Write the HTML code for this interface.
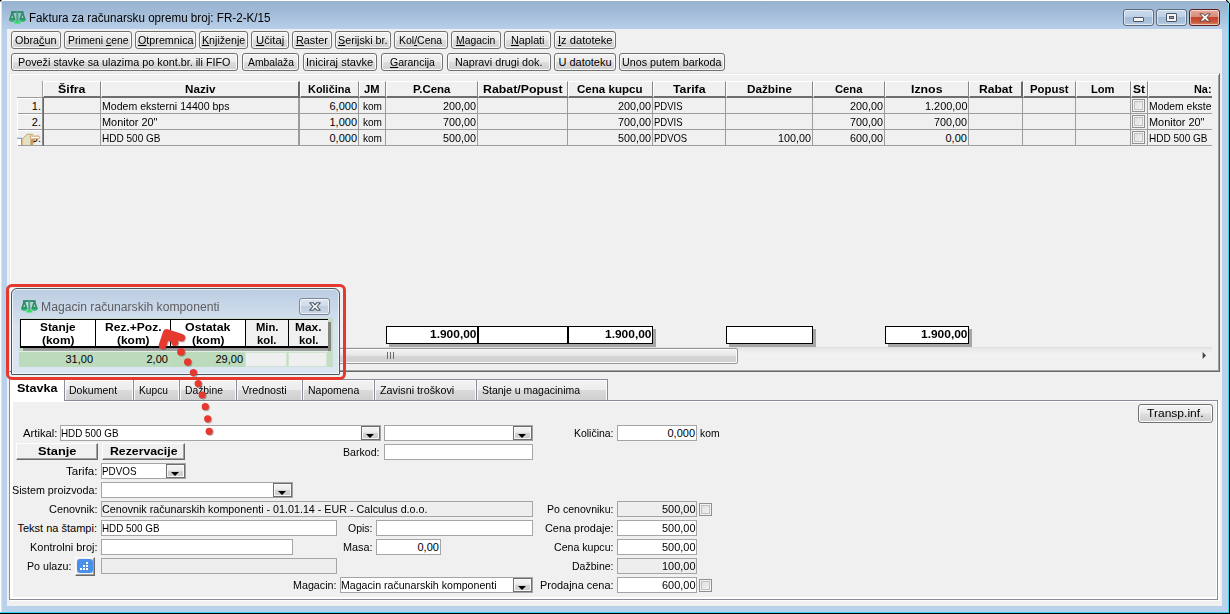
<!DOCTYPE html>
<html lang="sr">
<head>
<meta charset="utf-8">
<title>Faktura za računarsku opremu broj: FR-2-K/15</title>
<style>
html,body{margin:0;padding:0;background:#fff;}
body{width:1230px;height:614px;overflow:hidden;position:relative;font:11px "Liberation Sans",sans-serif;color:#000;}
#root{position:absolute;left:0;top:0;width:1230px;height:614px;overflow:hidden;}
#root div{position:absolute;box-sizing:border-box;}
#root svg{position:absolute;overflow:visible;}
.t{position:absolute;white-space:pre;transform-origin:0 0;}
.btn{border:1px solid #707070;border-radius:3px;background:linear-gradient(#f2f2f2 0,#ebebeb 47%,#dddddd 53%,#cfcfcf 100%);box-shadow:inset 0 0 0 1px #fcfcfc;}
.inp{background:#fff;border:1px solid #a5a5a5;}
.ro{background:#eeeeee;border:1px solid #a5a5a5;}
.dd{border:1px solid #6e6e6e;background:linear-gradient(#f4f4f4 0,#ececec 45%,#d4d4d4 50%,#cdcdcd 100%);box-shadow:inset 0 0 0 1px #f8f8f8;}
.dd:after{content:"";position:absolute;left:4px;top:7px;border-left:4px solid transparent;border-right:4px solid transparent;border-top:4px solid #000;}
.b3{background:#f0f0f0;border:1px solid;border-color:#fff #696969 #696969 #fff;box-shadow:inset -1px -1px 0 #a0a0a0;}
.hd{background:#f0f0f0;border-left:1px solid #fff;border-top:1px solid #fff;border-bottom:2px solid #6e6e6e;}
.cb{background:linear-gradient(135deg,#dcdcdc,#f6f6f6);border:1px solid #8e8f8f;box-shadow:inset 0 0 0 1px #f4f4f4, inset 0 0 0 2px #c0c0c0;}
.tab{border:1px solid #898c95;border-bottom:none;background:linear-gradient(#f3f3f3 0,#ececec 48%,#dadada 52%,#d0d0d0 100%);box-shadow:inset 1px 1px 0 #fbfbfb, inset -1px 0 0 #fbfbfb;}
.tot{background:#fff;border:1px solid #000;box-shadow:3px 3px 0 #a6a6a6;}
</style>
</head>
<body>
<div id="root">
<div style="left:1px;top:1px;width:1227px;height:612px;background:#b9d1ea;border-radius:3px 3px 0 0;"></div>
<div style="left:1px;top:1px;width:1227px;height:30px;background:linear-gradient(#97b2cf 0,#9fb9d6 30%,#adc5e0 65%,#b9d1ea 100%);border-radius:3px 3px 0 0;"></div>
<div style="left:1px;top:3px;width:1px;height:609px;background:#d6e3f2;"></div>
<div style="left:1228px;top:2px;width:1px;height:611px;background:linear-gradient(#a5e8fa 0,#48d4f4 12px,#3dd2f2 100%);"></div>
<div style="left:1229px;top:3px;width:1px;height:611px;background:#000;"></div>
<div style="left:0px;top:612px;width:1229px;height:1px;background:#35d0ea;"></div>
<div style="left:0px;top:613px;width:1230px;height:1px;background:#000;"></div>
<div style="left:0px;top:0px;width:2px;height:2px;background:linear-gradient(135deg,#000 35%,rgba(0,0,0,0) 70%);"></div>
<div style="left:1226px;top:0px;width:3px;height:3px;background:linear-gradient(45deg,rgba(0,0,0,0) 30%,#000 45%,#000 58%,rgba(0,0,0,0) 74%);"></div>
<div style="left:1229px;top:0px;width:1px;height:3px;background:#d0d0d0;"></div>
<svg style="left:9px;top:11px" width="17" height="13" viewBox="0 0 17 13">
<rect x="2" y="0.1" width="12.6" height="1.9" fill="#2f8c68"/>
<rect x="7.3" y="0.5" width="2.1" height="10" fill="#46a67c"/>
<path d="M2.4 1.5 L4.2 1.5 L6.5 8.4 Q6.3 10.5 3.3 10.5 Q0.3 10.5 0.1 8.4 Z" fill="#2a8c66"/>
<path d="M12.6 1.5 L14.4 1.5 L16.7 8.4 Q16.5 10.5 13.5 10.5 Q10.5 10.5 10.3 8.4 Z" fill="#2a8c66"/>
<path d="M3.3 4 L2.3 6.9 H4.3 Z" fill="#a9d6c2"/>
<path d="M13.5 4 L12.5 6.9 H14.5 Z" fill="#a9d6c2"/>
<path d="M0.2 8.5 Q0.5 10.6 3.3 10.6 Q6.1 10.6 6.4 8.5 Z" fill="#2fb56c"/>
<path d="M10.4 8.5 Q10.7 10.6 13.5 10.6 Q16.3 10.6 16.6 8.5 Z" fill="#2fb56c"/>
<path d="M5.1 12.5 Q5.3 9.7 8.35 9.7 Q11.4 9.7 11.6 12.5 Z" fill="#2de05a"/>
</svg>
<span class="t" style="left:29.25px;top:10px;line-height:16px;font-size:12px;transform:scaleX(0.9708);">Faktura za računarsku opremu broj: FR-2-K/15</span>
<div style="left:1123px;top:9px;width:31px;height:17px;background:linear-gradient(#c9daed 0,#bdd0e6 45%,#a4bcd8 50%,#a9c1dc 80%,#bdd2e8 100%);border:1px solid #5d6b7c;border-radius:3px;box-shadow:inset 0 0 0 1px rgba(255,255,255,.55);"></div>
<div style="left:1156px;top:9px;width:31px;height:17px;background:linear-gradient(#c9daed 0,#bdd0e6 45%,#a4bcd8 50%,#a9c1dc 80%,#bdd2e8 100%);border:1px solid #5d6b7c;border-radius:3px;box-shadow:inset 0 0 0 1px rgba(255,255,255,.55);"></div>
<div style="left:1189px;top:9px;width:31px;height:17px;background:linear-gradient(#e6a99b 0,#d98c7b 45%,#c6452b 50%,#c9563a 80%,#d98d6c 100%);border:1px solid #5b1f1c;border-radius:3px;box-shadow:inset 0 0 0 1px rgba(255,255,255,.55);"></div>
<div style="left:1133px;top:17px;width:11px;height:5px;background:#f4f4f4;border:1px solid #4d5561;border-radius:1px;"></div>
<div style="left:1166px;top:13px;width:11px;height:9px;background:#f4f4f4;border:1px solid #4d5561;border-radius:1px;"></div>
<div style="left:1169px;top:16px;width:5px;height:3px;background:#8aa3c4;border:1px solid #4d5561;"></div>
<svg style="left:1199px;top:13px" width="12" height="10" viewBox="0 0 12 10"><path d="M0.8 0.8 L4.3 0.8 L6 2.8 L7.7 0.8 L11.2 0.8 L8 4.5 L11.2 8.2 L7.7 8.2 L6 6.2 L4.3 8.2 L0.8 8.2 L4 4.5 Z" fill="#f6f6f6" stroke="#5a3a38" stroke-width="0.9" stroke-linejoin="round"/></svg>
<div style="left:7px;top:29px;width:1215px;height:577px;background:#f0f0f0;"></div>
<div class="btn" style="left:11px;top:31px;width:50px;height:18px;"></div>
<span class="t" style="left:15.25px;top:31px;line-height:18px;transform:scaleX(0.9833);">Obra<u>č</u>un</span>
<div class="btn" style="left:64px;top:31px;width:68px;height:18px;"></div>
<span class="t" style="left:67.75px;top:31px;line-height:18px;transform:scaleX(0.9423);">Primeni <u>c</u>ene</span>
<div class="btn" style="left:135px;top:31px;width:61px;height:18px;"></div>
<span class="t" style="left:137.75px;top:31px;line-height:18px;transform:scaleX(0.9761);"><u>O</u>tpremnica</span>
<div class="btn" style="left:199px;top:31px;width:49px;height:18px;"></div>
<span class="t" style="left:201.90px;top:31px;line-height:18px;transform:scaleX(0.9677);"><u>K</u>njiženje</span>
<div class="btn" style="left:251px;top:31px;width:38px;height:18px;"></div>
<span class="t" style="left:255.90px;top:31px;line-height:18px;transform:scaleX(1.0249);"><u>U</u>čitaj</span>
<div class="btn" style="left:292px;top:31px;width:40px;height:18px;"></div>
<span class="t" style="left:296.05px;top:31px;line-height:18px;transform:scaleX(0.9844);"><u>R</u>aster</span>
<div class="btn" style="left:335px;top:31px;width:56px;height:18px;"></div>
<span class="t" style="left:338.25px;top:31px;line-height:18px;transform:scaleX(0.9754);"><u>S</u>erijski br.</span>
<div class="btn" style="left:394px;top:31px;width:54px;height:18px;"></div>
<span class="t" style="left:399.45px;top:31px;line-height:18px;transform:scaleX(0.9522);">Kol<u>/</u>Cena</span>
<div class="btn" style="left:451px;top:31px;width:50px;height:18px;"></div>
<span class="t" style="left:456.40px;top:31px;line-height:18px;transform:scaleX(0.9428);"><u>M</u>agacin</span>
<div class="btn" style="left:504px;top:31px;width:47px;height:18px;"></div>
<span class="t" style="left:510.75px;top:31px;line-height:18px;transform:scaleX(0.9781);"><u>N</u>aplati</span>
<div class="btn" style="left:554px;top:31px;width:62px;height:18px;"></div>
<span class="t" style="left:557.75px;top:31px;line-height:18px;transform:scaleX(1.0125);"><u>I</u>z datoteke</span>
<div class="btn" style="left:11px;top:53px;width:227px;height:18px;"></div>
<span class="t" style="left:18.25px;top:53px;line-height:18px;transform:scaleX(0.9819);">Poveži stavke sa ulazima po kont.br. ili FIFO</span>
<div class="btn" style="left:242px;top:53px;width:57px;height:18px;"></div>
<span class="t" style="left:247.50px;top:53px;line-height:18px;transform:scaleX(0.9403);">Ambalaža</span>
<div class="btn" style="left:303px;top:53px;width:74px;height:18px;"></div>
<span class="t" style="left:306.40px;top:53px;line-height:18px;transform:scaleX(1.0084);">Iniciraj stavke</span>
<div class="btn" style="left:381px;top:53px;width:62px;height:18px;"></div>
<span class="t" style="left:389.55px;top:53px;line-height:18px;transform:scaleX(0.9537);"><u>G</u>arancija</span>
<div class="btn" style="left:447px;top:53px;width:104px;height:18px;"></div>
<span class="t" style="left:455.25px;top:53px;line-height:18px;transform:scaleX(0.9800);">Napravi drugi dok.</span>
<div class="btn" style="left:554px;top:53px;width:62px;height:18px;"></div>
<span class="t" style="left:558.40px;top:53px;line-height:18px;">U datoteku</span>
<div class="btn" style="left:619px;top:53px;width:106px;height:18px;"></div>
<span class="t" style="left:622.25px;top:53px;line-height:18px;transform:scaleX(0.9743);">Unos putem barkoda</span>
<div style="left:9px;top:73px;width:1211px;height:299px;border:1px solid;border-color:#e6e6e6 #696969 #696969 #e6e6e6;box-shadow:inset 1px 1px 0 #fff, inset -1px -1px 0 #a0a0a0;"></div>
<div style="left:42px;top:81px;width:1px;height:16px;background:#a0a0a0;"></div>
<div class="hd" style="left:43px;top:81px;width:58px;height:17px;border-right:1px solid #868686;"></div>
<span class="t" style="left:57.75px;top:82px;line-height:15px;font-weight:bold;transform:scaleX(1.1239);">Šifra</span>
<div class="hd" style="left:101px;top:81px;width:199px;height:17px;border-right:2px solid #696969;"></div>
<span class="t" style="left:184.75px;top:82px;line-height:15px;font-weight:bold;transform:scaleX(1.0609);">Naziv</span>
<div class="hd" style="left:300px;top:81px;width:59px;height:17px;border-right:1px solid #868686;"></div>
<span class="t" style="left:307.75px;top:82px;line-height:15px;font-weight:bold;transform:scaleX(0.9931);">Količina</span>
<div class="hd" style="left:359px;top:81px;width:27px;height:17px;border-right:1px solid #868686;"></div>
<span class="t" style="left:364.25px;top:82px;line-height:15px;font-weight:bold;transform:scaleX(1.0143);">JM</span>
<div class="hd" style="left:386px;top:81px;width:92px;height:17px;border-right:1px solid #868686;"></div>
<span class="t" style="left:412.75px;top:82px;line-height:15px;font-weight:bold;transform:scaleX(1.0453);">P.Cena</span>
<div class="hd" style="left:478px;top:81px;width:90px;height:17px;border-right:1px solid #868686;"></div>
<span class="t" style="left:482.75px;top:82px;line-height:15px;font-weight:bold;transform:scaleX(1.1212);">Rabat/Popust</span>
<div class="hd" style="left:568px;top:81px;width:85px;height:17px;border-right:1px solid #868686;"></div>
<span class="t" style="left:577.25px;top:82px;line-height:15px;font-weight:bold;transform:scaleX(1.0504);">Cena kupcu</span>
<div class="hd" style="left:653px;top:81px;width:73px;height:17px;border-right:1px solid #868686;"></div>
<span class="t" style="left:672.75px;top:82px;line-height:15px;font-weight:bold;transform:scaleX(1.1153);">Tarifa</span>
<div class="hd" style="left:726px;top:81px;width:87px;height:17px;border-right:1px solid #868686;"></div>
<span class="t" style="left:746.50px;top:82px;line-height:15px;font-weight:bold;transform:scaleX(1.0667);">Dažbine</span>
<div class="hd" style="left:813px;top:81px;width:72px;height:17px;border-right:1px solid #868686;"></div>
<span class="t" style="left:834.75px;top:82px;line-height:15px;font-weight:bold;transform:scaleX(1.0221);">Cena</span>
<div class="hd" style="left:885px;top:81px;width:84px;height:17px;border-right:1px solid #868686;"></div>
<span class="t" style="left:910.75px;top:82px;line-height:15px;font-weight:bold;transform:scaleX(1.1200);">Iznos</span>
<div class="hd" style="left:969px;top:81px;width:54px;height:17px;border-right:2px solid #696969;"></div>
<span class="t" style="left:978.75px;top:82px;line-height:15px;font-weight:bold;transform:scaleX(1.0961);">Rabat</span>
<div class="hd" style="left:1023px;top:81px;width:53px;height:17px;border-right:1px solid #868686;"></div>
<span class="t" style="left:1029.75px;top:82px;line-height:15px;font-weight:bold;transform:scaleX(1.0327);">Popust</span>
<div class="hd" style="left:1076px;top:81px;width:55px;height:17px;border-right:1px solid #868686;"></div>
<span class="t" style="left:1091.25px;top:82px;line-height:15px;font-weight:bold;transform:scaleX(1.0114);">Lom</span>
<div class="hd" style="left:1131px;top:81px;width:17px;height:17px;border-right:1px solid #868686;"></div>
<span class="t" style="left:1133.00px;top:82px;line-height:15px;font-weight:bold;transform:scaleX(1.0909);">St</span>
<div style="left:1148px;top:81px;width:64px;height:17px;background:#f0f0f0;border-left:1px solid #fff;border-top:1px solid #fff;border-bottom:2px solid #6e6e6e;"></div>
<span class="t" style="left:1193.50px;top:82px;line-height:15px;font-weight:bold;transform:scaleX(0.9868);">Na:</span>
<div style="left:17px;top:97px;width:26px;height:1px;background:#9c9c9c;"></div>
<div style="left:17px;top:113px;width:1195px;height:1px;background:#9c9c9c;"></div>
<div style="left:18px;top:98px;width:25px;height:1px;background:#fff;"></div>
<div style="left:17px;top:129px;width:1195px;height:1px;background:#9c9c9c;"></div>
<div style="left:18px;top:114px;width:25px;height:1px;background:#fff;"></div>
<div style="left:17px;top:145px;width:1195px;height:1px;background:#9c9c9c;"></div>
<div style="left:18px;top:130px;width:25px;height:1px;background:#fff;"></div>
<div style="left:100px;top:98px;width:1px;height:48px;background:#9c9c9c;"></div>
<div style="left:299px;top:98px;width:1px;height:48px;background:#9c9c9c;"></div>
<div style="left:358px;top:98px;width:1px;height:48px;background:#9c9c9c;"></div>
<div style="left:385px;top:98px;width:1px;height:48px;background:#9c9c9c;"></div>
<div style="left:477px;top:98px;width:1px;height:48px;background:#9c9c9c;"></div>
<div style="left:567px;top:98px;width:1px;height:48px;background:#9c9c9c;"></div>
<div style="left:652px;top:98px;width:1px;height:48px;background:#9c9c9c;"></div>
<div style="left:725px;top:98px;width:1px;height:48px;background:#9c9c9c;"></div>
<div style="left:812px;top:98px;width:1px;height:48px;background:#9c9c9c;"></div>
<div style="left:884px;top:98px;width:1px;height:48px;background:#9c9c9c;"></div>
<div style="left:968px;top:98px;width:1px;height:48px;background:#9c9c9c;"></div>
<div style="left:1022px;top:98px;width:1px;height:48px;background:#9c9c9c;"></div>
<div style="left:1075px;top:98px;width:1px;height:48px;background:#9c9c9c;"></div>
<div style="left:1130px;top:98px;width:1px;height:48px;background:#9c9c9c;"></div>
<div style="left:1147px;top:98px;width:1px;height:48px;background:#9c9c9c;"></div>
<div style="left:298px;top:98px;width:1px;height:48px;background:#9c9c9c;"></div>
<div style="left:17px;top:98px;width:1px;height:48px;background:#fff;"></div>
<div style="left:42px;top:97px;width:1px;height:49px;background:#8a8a8a;"></div>
<div style="left:43px;top:97px;width:1px;height:49px;background:#696969;"></div>
<span class="t" style="left:31.81px;top:99px;line-height:15px;">1.</span>
<span class="t" style="left:101.75px;top:99px;line-height:15px;transform:scaleX(0.9609);">Modem eksterni 14400 bps</span>
<span class="t" style="left:329.50px;top:99px;line-height:15px;">6,000</span>
<span class="t" style="left:362.50px;top:99px;line-height:15px;transform:scaleX(0.9143);">kom</span>
<span class="t" style="left:443.00px;top:99px;line-height:15px;transform:scaleX(0.9805);">200,00</span>
<span class="t" style="left:618.00px;top:99px;line-height:15px;transform:scaleX(0.9805);">200,00</span>
<span class="t" style="left:653.75px;top:99px;line-height:15px;transform:scaleX(0.8632);">PDVIS</span>
<span class="t" style="left:850.00px;top:99px;line-height:15px;transform:scaleX(0.9805);">200,00</span>
<span class="t" style="left:924.50px;top:99px;line-height:15px;transform:scaleX(0.9923);">1.200,00</span>
<div class="cb" style="left:1132px;top:99px;width:13px;height:13px;"></div>
<span class="t" style="left:1148.75px;top:99px;line-height:15px;transform:scaleX(0.9465);">Modem ekste</span>
<span class="t" style="left:31.81px;top:115px;line-height:15px;">2.</span>
<span class="t" style="left:101.75px;top:115px;line-height:15px;transform:scaleX(0.9930);">Monitor 20&quot;</span>
<span class="t" style="left:329.50px;top:115px;line-height:15px;">1,000</span>
<span class="t" style="left:362.50px;top:115px;line-height:15px;transform:scaleX(0.9143);">kom</span>
<span class="t" style="left:443.00px;top:115px;line-height:15px;transform:scaleX(0.9805);">700,00</span>
<span class="t" style="left:618.00px;top:115px;line-height:15px;transform:scaleX(0.9805);">700,00</span>
<span class="t" style="left:653.75px;top:115px;line-height:15px;transform:scaleX(0.8632);">PDVIS</span>
<span class="t" style="left:850.00px;top:115px;line-height:15px;transform:scaleX(0.9805);">700,00</span>
<span class="t" style="left:934.00px;top:115px;line-height:15px;transform:scaleX(0.9805);">700,00</span>
<div class="cb" style="left:1132px;top:115px;width:13px;height:13px;"></div>
<span class="t" style="left:1148.75px;top:115px;line-height:15px;transform:scaleX(0.9930);">Monitor 20&quot;</span>
<span class="t" style="left:31.81px;top:131px;line-height:15px;">3.</span>
<span class="t" style="left:101.75px;top:131px;line-height:15px;transform:scaleX(0.9112);">HDD 500 GB</span>
<span class="t" style="left:329.50px;top:131px;line-height:15px;">0,000</span>
<span class="t" style="left:362.50px;top:131px;line-height:15px;transform:scaleX(0.9143);">kom</span>
<span class="t" style="left:443.00px;top:131px;line-height:15px;transform:scaleX(0.9805);">500,00</span>
<span class="t" style="left:618.00px;top:131px;line-height:15px;transform:scaleX(0.9805);">500,00</span>
<span class="t" style="left:653.75px;top:131px;line-height:15px;transform:scaleX(0.8600);">PDVOS</span>
<span class="t" style="left:778.00px;top:131px;line-height:15px;transform:scaleX(0.9805);">100,00</span>
<span class="t" style="left:850.00px;top:131px;line-height:15px;transform:scaleX(0.9805);">600,00</span>
<span class="t" style="left:945.50px;top:131px;line-height:15px;">0,00</span>
<div class="cb" style="left:1132px;top:131px;width:13px;height:13px;"></div>
<span class="t" style="left:1148.75px;top:131px;line-height:15px;transform:scaleX(0.9112);">HDD 500 GB</span>
<div style="left:1212px;top:81px;width:5px;height:66px;background:#f0f0f0;"></div>
<div style="left:18px;top:131px;width:24px;height:14px;background:#f0f0f0;"></div>
<span class="t" style="left:31.81px;top:131px;line-height:15px;">3.</span>
<svg style="left:17px;top:133px;overflow:hidden" width="24" height="12" viewBox="0 0 24 12">
<rect x="15.5" y="0.3" width="5" height="3" fill="#f0f0f0"/>
<rect x="0" y="5.6" width="4.6" height="7.4" fill="#fff"/>
<path d="M0 5.3 H4.7 V13" stroke="#6f90cc" fill="none" stroke-width="1.1"/>
<path d="M5.6 5.6 L10.2 1.3 L15.8 1.3 L16.2 3 L22 3.2 Q23.4 4.5 22 5.9 L13.2 6.1 L13.2 13 L5.6 13 Z" fill="#e1e1c3"/>
<path d="M5.5 5.8 L10.2 1.3 L16 1.3" stroke="#c99557" fill="none" stroke-width="0.9"/>
<path d="M5.7 6 V13" stroke="#e8b860" fill="none" stroke-width="0.9"/>
<path d="M13.2 3.1 L22 3.2 Q23.4 4.5 22 5.8 L13.6 5.9 Z" fill="#fff" stroke="#c99557" stroke-width="0.9"/>
<path d="M13.4 6.2 H18.6 L17.6 8 L16 8.4 L17.6 9.2 L17.4 10.3 L15.6 10.6 L17.2 13 H13.2 Z" fill="#c79a5c"/>
</svg>
<div class="tot" style="left:386px;top:326px;width:92px;height:18px;"></div>
<span class="t" style="left:429.50px;top:327px;line-height:15px;font-weight:bold;transform:scaleX(1.0857);">1.900,00</span>
<div class="tot" style="left:478px;top:326px;width:90px;height:18px;"></div>
<div class="tot" style="left:568px;top:326px;width:85px;height:18px;"></div>
<span class="t" style="left:604.50px;top:327px;line-height:15px;font-weight:bold;transform:scaleX(1.0857);">1.900,00</span>
<div class="tot" style="left:726px;top:326px;width:87px;height:18px;"></div>
<div class="tot" style="left:885px;top:326px;width:84px;height:18px;"></div>
<span class="t" style="left:920.50px;top:327px;line-height:15px;font-weight:bold;transform:scaleX(1.0857);">1.900,00</span>
<div style="left:17px;top:347px;width:1195px;height:16px;background:linear-gradient(#e6e6e6,#f2f2f2 40%,#f0f0f0);border-top:1px solid #e0e0e0;"></div>
<div style="left:34px;top:348px;width:704px;height:16px;border:1px solid #979797;border-radius:2px;background:linear-gradient(#f3f3f3 0,#e7e7e7 45%,#d6d6d6 50%,#d0d0d0 100%);box-shadow:inset 0 0 0 1px #fafafa;"></div>
<div style="left:387px;top:352px;width:1px;height:7px;background:#6d6d6d;"></div>
<div style="left:390px;top:352px;width:1px;height:7px;background:#6d6d6d;"></div>
<div style="left:393px;top:352px;width:1px;height:7px;background:#6d6d6d;"></div>
<svg style="left:1202px;top:351px" width="5" height="9" viewBox="0 0 5 9"><path d="M0.6 1 L4 4.5 L0.6 8 Z" fill="#444"/></svg>
<div style="left:10px;top:400px;width:1210px;height:201px;background:#fff;"></div>
<div style="left:9px;top:400px;width:1209px;height:200px;border:1px solid #898c95;background:#f0f0f0;box-shadow:inset 3px 1px 0 #fff, inset -1px -2px 0 #fff;"></div>
<div class="tab" style="left:64px;top:379px;width:70px;height:21px;"></div>
<span class="t" style="left:69.25px;top:382px;line-height:16px;transform:scaleX(0.9593);">Dokument</span>
<div class="tab" style="left:133px;top:379px;width:47px;height:21px;"></div>
<span class="t" style="left:139.25px;top:382px;line-height:16px;transform:scaleX(0.9294);">Kupcu</span>
<div class="tab" style="left:179px;top:379px;width:58px;height:21px;"></div>
<span class="t" style="left:185.25px;top:382px;line-height:16px;transform:scaleX(0.9391);">Dažbine</span>
<div class="tab" style="left:236px;top:379px;width:67px;height:21px;"></div>
<span class="t" style="left:242.25px;top:382px;line-height:16px;transform:scaleX(0.9704);">Vrednosti</span>
<div class="tab" style="left:302px;top:379px;width:73px;height:21px;"></div>
<span class="t" style="left:308.25px;top:382px;line-height:16px;transform:scaleX(0.9530);">Napomena</span>
<div class="tab" style="left:374px;top:379px;width:103px;height:21px;"></div>
<span class="t" style="left:380.25px;top:382px;line-height:16px;transform:scaleX(0.9789);">Zavisni troškovi</span>
<div class="tab" style="left:476px;top:379px;width:132px;height:21px;"></div>
<span class="t" style="left:482.25px;top:382px;line-height:16px;transform:scaleX(0.9549);">Stanje u magacinima</span>
<div style="left:9px;top:377px;width:56px;height:23px;background:#fff;border:1px solid #898c95;border-bottom:none;"></div>
<div style="left:10px;top:400px;width:54px;height:2px;background:#fff;"></div>
<span class="t" style="left:16.75px;top:380px;line-height:16px;font-weight:bold;transform:scaleX(1.1413);">Stavka</span>
<div class="btn" style="left:1138px;top:404px;width:75px;height:19px;"></div>
<span class="t" style="left:1147.25px;top:404px;line-height:19px;transform:scaleX(1.0958);">Transp.inf.</span>
<span class="t" style="left:22.50px;top:425px;line-height:16px;transform:scaleX(1.0260);">Artikal:</span>
<div class="inp" style="left:60px;top:425px;width:321px;height:16px;"></div>
<span class="t" style="left:60.75px;top:425px;line-height:16px;transform:scaleX(0.8956);">HDD 500 GB</span>
<div class="dd" style="left:361px;top:426px;width:19px;height:14px;"></div>
<div class="inp" style="left:384px;top:425px;width:149px;height:16px;"></div>
<div class="dd" style="left:513px;top:426px;width:19px;height:14px;"></div>
<span class="t" style="left:573.50px;top:425px;line-height:16px;transform:scaleX(0.9500);">Količina:</span>
<div class="inp" style="left:617px;top:425px;width:80px;height:16px;"></div>
<span class="t" style="left:667.50px;top:425px;line-height:16px;">0,000</span>
<span class="t" style="left:699.75px;top:425px;line-height:16px;transform:scaleX(0.9383);">kom</span>
<div class="b3" style="left:16px;top:443px;width:82px;height:17px;"></div>
<span class="t" style="left:37.75px;top:444px;line-height:15px;font-weight:bold;transform:scaleX(1.1661);">Stanje</span>
<div class="b3" style="left:102px;top:443px;width:83px;height:17px;"></div>
<span class="t" style="left:109.75px;top:444px;line-height:15px;font-weight:bold;transform:scaleX(1.1148);">Rezervacije</span>
<span class="t" style="left:342.50px;top:444px;line-height:16px;transform:scaleX(0.9625);">Barkod:</span>
<div class="inp" style="left:384px;top:444px;width:149px;height:16px;"></div>
<span class="t" style="left:65.50px;top:463px;line-height:16px;transform:scaleX(1.0511);">Tarifa:</span>
<div class="inp" style="left:101px;top:463px;width:85px;height:16px;"></div>
<span class="t" style="left:101.75px;top:463px;line-height:16px;transform:scaleX(0.8957);">PDVOS</span>
<div class="dd" style="left:166px;top:464px;width:19px;height:14px;"></div>
<span class="t" style="left:11.50px;top:482px;line-height:16px;transform:scaleX(0.9778);">Sistem proizvoda:</span>
<div class="inp" style="left:101px;top:482px;width:192px;height:16px;"></div>
<div class="dd" style="left:273px;top:483px;width:19px;height:14px;"></div>
<span class="t" style="left:48.50px;top:501px;line-height:16px;transform:scaleX(0.9914);">Cenovnik:</span>
<div class="ro" style="left:101px;top:501px;width:432px;height:16px;"></div>
<span class="t" style="left:101.75px;top:501px;line-height:16px;transform:scaleX(0.9750);">Cenovnik računarskih komponenti - 01.01.14 - EUR - Calculus d.o.o.</span>
<span class="t" style="left:546.50px;top:501px;line-height:16px;transform:scaleX(0.9622);">Po cenovniku:</span>
<div class="ro" style="left:617px;top:501px;width:80px;height:16px;"></div>
<span class="t" style="left:661.50px;top:501px;line-height:16px;transform:scaleX(0.9954);">500,00</span>
<div class="cb" style="left:699px;top:503px;width:13px;height:13px;"></div>
<span class="t" style="left:17.50px;top:520px;line-height:16px;">Tekst na štampi:</span>
<div class="inp" style="left:101px;top:520px;width:236px;height:16px;"></div>
<span class="t" style="left:101.75px;top:520px;line-height:16px;transform:scaleX(0.8956);">HDD 500 GB</span>
<span class="t" style="left:347.50px;top:520px;line-height:16px;transform:scaleX(0.9538);">Opis:</span>
<div class="inp" style="left:376px;top:520px;width:157px;height:16px;"></div>
<span class="t" style="left:544.50px;top:520px;line-height:16px;transform:scaleX(0.9912);">Cena prodaje:</span>
<div class="inp" style="left:617px;top:520px;width:80px;height:16px;"></div>
<span class="t" style="left:661.50px;top:520px;line-height:16px;transform:scaleX(0.9954);">500,00</span>
<span class="t" style="left:29.50px;top:539px;line-height:16px;transform:scaleX(0.9945);">Kontrolni broj:</span>
<div class="inp" style="left:101px;top:539px;width:192px;height:16px;"></div>
<span class="t" style="left:342.50px;top:539px;line-height:16px;transform:scaleX(0.9844);">Masa:</span>
<div class="inp" style="left:376px;top:539px;width:65px;height:16px;"></div>
<span class="t" style="left:417.50px;top:539px;line-height:16px;">0,00</span>
<span class="t" style="left:553.50px;top:539px;line-height:16px;transform:scaleX(0.9633);">Cena kupcu:</span>
<div class="inp" style="left:617px;top:539px;width:80px;height:16px;"></div>
<span class="t" style="left:661.50px;top:539px;line-height:16px;transform:scaleX(0.9954);">500,00</span>
<span class="t" style="left:26.50px;top:558px;line-height:16px;transform:scaleX(0.9700);">Po ulazu:</span>
<div style="left:75px;top:557px;width:20px;height:19px;background:#f0f0f0;border:1px solid;border-color:#fff #696969 #696969 #fff;box-shadow:inset -1px -1px 0 #a0a0a0;"></div>
<div style="left:77px;top:559px;width:16px;height:14px;background:#4a90e8;border-radius:3px;"></div>
<div style="left:80px;top:568px;width:2px;height:2px;background:#fff;"></div>
<div style="left:83px;top:568px;width:2px;height:2px;background:#fff;"></div>
<div style="left:86px;top:568px;width:2px;height:2px;background:#fff;"></div>
<div style="left:83px;top:565px;width:2px;height:2px;background:#fff;"></div>
<div style="left:86px;top:565px;width:2px;height:2px;background:#fff;"></div>
<div style="left:86px;top:562px;width:2px;height:2px;background:#fff;"></div>
<div class="ro" style="left:101px;top:558px;width:236px;height:16px;"></div>
<span class="t" style="left:571.50px;top:558px;line-height:16px;transform:scaleX(0.9557);">Dažbine:</span>
<div class="ro" style="left:617px;top:558px;width:80px;height:16px;"></div>
<span class="t" style="left:661.50px;top:558px;line-height:16px;transform:scaleX(0.9954);">100,00</span>
<span class="t" style="left:292.50px;top:577px;line-height:16px;transform:scaleX(0.9744);">Magacin:</span>
<div class="inp" style="left:340px;top:577px;width:193px;height:16px;"></div>
<span class="t" style="left:340.75px;top:577px;line-height:16px;transform:scaleX(0.9633);">Magacin računarskih komponenti</span>
<div class="dd" style="left:513px;top:578px;width:19px;height:14px;"></div>
<span class="t" style="left:539.50px;top:577px;line-height:16px;transform:scaleX(0.9932);">Prodajna cena:</span>
<div class="inp" style="left:617px;top:577px;width:80px;height:16px;"></div>
<span class="t" style="left:661.50px;top:577px;line-height:16px;transform:scaleX(0.9954);">600,00</span>
<div class="cb" style="left:699px;top:579px;width:13px;height:13px;"></div>
<div style="left:11px;top:288px;width:329px;height:87px;background:linear-gradient(#bccde2 0,#cbd9ea 25%,#d8e3f1 45%,#dbe6f3 100%);border:1px solid #4a5561;border-radius:6px 6px 1px 1px;box-shadow:inset 0 0 0 1px rgba(255,255,255,.65);"></div>
<svg style="left:21px;top:300px" width="17" height="13" viewBox="0 0 17 13">
<rect x="2" y="0.1" width="12.6" height="1.9" fill="#2f8c68"/>
<rect x="7.3" y="0.5" width="2.1" height="10" fill="#46a67c"/>
<path d="M2.4 1.5 L4.2 1.5 L6.5 8.4 Q6.3 10.5 3.3 10.5 Q0.3 10.5 0.1 8.4 Z" fill="#2a8c66"/>
<path d="M12.6 1.5 L14.4 1.5 L16.7 8.4 Q16.5 10.5 13.5 10.5 Q10.5 10.5 10.3 8.4 Z" fill="#2a8c66"/>
<path d="M3.3 4 L2.3 6.9 H4.3 Z" fill="#a9d6c2"/>
<path d="M13.5 4 L12.5 6.9 H14.5 Z" fill="#a9d6c2"/>
<path d="M0.2 8.5 Q0.5 10.6 3.3 10.6 Q6.1 10.6 6.4 8.5 Z" fill="#2fb56c"/>
<path d="M10.4 8.5 Q10.7 10.6 13.5 10.6 Q16.3 10.6 16.6 8.5 Z" fill="#2fb56c"/>
<path d="M5.1 12.5 Q5.3 9.7 8.35 9.7 Q11.4 9.7 11.6 12.5 Z" fill="#2de05a"/>
</svg>
<span class="t" style="left:40.75px;top:299px;line-height:16px;font-size:12px;color:#5e5e5e;transform:scaleX(1.0137);">Magacin računarskih komponenti</span>
<div style="left:299px;top:298px;width:31px;height:17px;background:linear-gradient(#dbe4f0 0,#d0dbea 45%,#c0cee0 50%,#c8d5e5 100%);border:1px solid #7c8795;border-radius:3px;box-shadow:inset 0 0 0 1px rgba(255,255,255,.7);"></div>
<svg style="left:308.5px;top:302px" width="12" height="9" viewBox="0 0 12 9"><path d="M0.8 0.8 L4.3 0.8 L6 2.8 L7.7 0.8 L11.2 0.8 L8 4.5 L11.2 8.2 L7.7 8.2 L6 6.2 L4.3 8.2 L0.8 8.2 L4 4.5 Z" fill="#fdfdfd" stroke="#4f5864" stroke-width="1.1" stroke-linejoin="round"/></svg>
<div style="left:19px;top:318px;width:314px;height:49px;background:#c4ddc4;"></div>
<div style="left:19px;top:351px;width:309px;height:1px;background:#e2efe2;"></div>
<div style="left:23px;top:348px;width:305px;height:3px;background:linear-gradient(#8e8e8e,#a4a4a4);"></div>
<div style="left:20px;top:319px;width:75px;height:29px;background:#fff;border:1px solid #000;border-width:1px 0 2px 1px;"></div>
<span class="t" style="left:40.25px;top:321px;line-height:13px;font-weight:bold;transform:scaleX(1.0752);">Stanje</span>
<span class="t" style="left:41.75px;top:334px;line-height:13px;font-weight:bold;transform:scaleX(1.0850);">(kom)</span>
<div style="left:19px;top:352px;width:75px;height:15px;background:#bcdabc;"></div>
<span class="t" style="left:65.50px;top:352px;line-height:15px;">31,00</span>
<div style="left:95px;top:319px;width:75px;height:29px;background:#fff;border:1px solid #000;border-width:1px 0 2px 1px;"></div>
<span class="t" style="left:104.75px;top:321px;line-height:13px;font-weight:bold;transform:scaleX(1.0938);">Rez.+Poz.</span>
<span class="t" style="left:116.75px;top:334px;line-height:13px;font-weight:bold;transform:scaleX(1.0850);">(kom)</span>
<div style="left:95px;top:352px;width:74px;height:15px;background:#bcdabc;"></div>
<span class="t" style="left:146.50px;top:352px;line-height:15px;">2,00</span>
<div style="left:170px;top:319px;width:75px;height:29px;background:#fff;border:1px solid #000;border-width:1px 0 2px 1px;"></div>
<span class="t" style="left:185.25px;top:321px;line-height:13px;font-weight:bold;transform:scaleX(1.1274);">Ostatak</span>
<span class="t" style="left:191.75px;top:334px;line-height:13px;font-weight:bold;transform:scaleX(1.0850);">(kom)</span>
<div style="left:170px;top:352px;width:74px;height:15px;background:#bcdabc;"></div>
<span class="t" style="left:215.50px;top:352px;line-height:15px;">29,00</span>
<div style="left:245px;top:319px;width:43px;height:29px;background:#f0f0f0;border:1px solid #000;border-width:1px 0 2px 1px;"></div>
<span class="t" style="left:255.75px;top:321px;line-height:13px;font-weight:bold;transform:scaleX(1.0227);">Min.</span>
<span class="t" style="left:257.25px;top:334px;line-height:13px;font-weight:bold;transform:scaleX(1.0289);">kol.</span>
<div style="left:245px;top:352px;width:42px;height:15px;background:#efefef;border:1px solid #cfe3cf;"></div>
<div style="left:288px;top:319px;width:40px;height:29px;background:#f0f0f0;border:1px solid #000;border-width:1px 0 2px 1px;"></div>
<span class="t" style="left:295.25px;top:321px;line-height:13px;font-weight:bold;transform:scaleX(1.0830);">Max.</span>
<span class="t" style="left:298.75px;top:334px;line-height:13px;font-weight:bold;transform:scaleX(1.0289);">kol.</span>
<div style="left:288px;top:352px;width:39px;height:15px;background:#efefef;border:1px solid #cfe3cf;"></div>
<div style="left:328px;top:322px;width:3px;height:29px;background:#838383;"></div>
<svg style="left:0;top:0" width="1230" height="614" viewBox="0 0 1230 614">
<rect x="7.5" y="285.5" width="337" height="93" rx="4.5" ry="4.5" fill="none" stroke="#e5392f" stroke-width="3"/>
<g fill="#e5392f" style="filter:drop-shadow(1px 1px 0.6px rgba(60,60,60,.35))">
<circle cx="209.2" cy="431.3" r="3.6"/><circle cx="207.7" cy="418.8" r="3.6"/><circle cx="205.3" cy="406.7" r="3.6"/>
<circle cx="202.2" cy="395" r="3.6"/><circle cx="198.2" cy="383.6" r="3.6"/><circle cx="193.4" cy="372.6" r="3.6"/>
<circle cx="187.7" cy="362" r="3.7"/><circle cx="181" cy="351.8" r="3.9"/><circle cx="174.8" cy="342.3" r="3.6"/>
<path d="M162.6 345.3 L166.6 333 L181.3 337.6" fill="none" stroke="#e5392f" stroke-width="7.6" stroke-linecap="round" stroke-linejoin="round"/>
<path d="M166.6 333 L181.3 337.6 L174.8 343 L165 340 Z"/>
</g>
</svg>
</div>
</body>
</html>
